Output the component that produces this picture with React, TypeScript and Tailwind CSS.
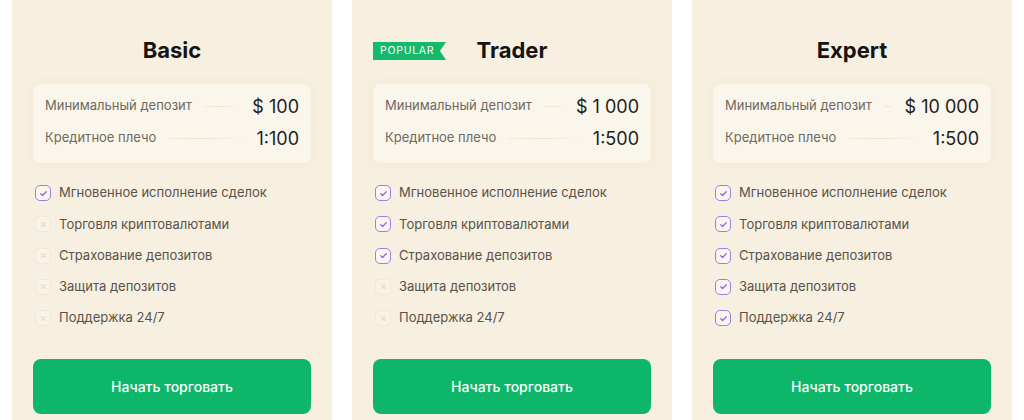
import React from 'react'

type Plan = {
  name: string
  deposit: string
  leverage: string
  enabled: number
  popular?: boolean
}

const plans: Plan[] = [
  { name: 'Basic', deposit: '$ 100', leverage: '1:100', enabled: 1 },
  { name: 'Trader', deposit: '$ 1 000', leverage: '1:500', enabled: 3, popular: true },
  { name: 'Expert', deposit: '$ 10 000', leverage: '1:500', enabled: 5 },
]

const features = [
  'Мгновенное исполнение сделок',
  'Торговля криптовалютами',
  'Страхование депозитов',
  'Защита депозитов',
  'Поддержка 24/7',
]

const CheckBox = ({ on }: { on: boolean }) =>
  on ? (
    <span className="flex h-4 w-4 shrink-0 items-center justify-center rounded-[5px] border-[1.5px] border-[#9a7fe6] bg-[#fbf7f0]">
      <svg width="9" height="9" viewBox="0 0 10 10" fill="none">
        <path d="M2 5.2l2 2L8 3" stroke="#8a6ae0" strokeWidth="1.4" strokeLinecap="round" strokeLinejoin="round" />
      </svg>
    </span>
  ) : (
    <span className="flex h-4 w-4 shrink-0 items-center justify-center rounded-[5px] border border-[#efe7d7] bg-[#f9f3e7]">
      <svg width="7" height="7" viewBox="0 0 8 8" fill="none">
        <path d="M1.5 1.5l5 5M6.5 1.5l-5 5" stroke="#e4dccb" strokeWidth="1.2" strokeLinecap="round" />
      </svg>
    </span>
  )

const StatRow = ({ label, value }: { label: string; value: string }) => (
  <div className="flex h-6 items-center">
    <span className="text-[13px] text-[#6d6960]">{label}</span>
    <span className="mx-3 h-px flex-1 bg-gradient-to-r from-[#f3ead9] via-[#ede3cf] to-transparent" />
    <span className="text-[18px] text-[#1d1d1b]">{value}</span>
  </div>
)

const PlanCard = ({ plan }: { plan: Plan }) => (
  <article className="relative flex h-[440px] w-[320px] flex-col bg-[#f7efdf] px-[21px] pt-9">
    {/* ── Ribbon ── */}
    {plan.popular && (
      <span className="absolute left-[21px] top-[42px] flex h-[18px] w-[73px] items-center bg-[#14b96c] pl-[7px] text-[10.5px] tracking-[0.07em] text-white [clip-path:polygon(0_0,100%_0,calc(100%-6px)_50%,100%_100%,0_100%)]">
        POPULAR
      </span>
    )}

    <h2 className="text-center text-[22px] font-bold leading-7 text-[#151515]">{plan.name}</h2>

    {/* ── Stats ── */}
    <div className="mt-5 flex flex-col gap-2 rounded-lg bg-[#fbf6ec] px-3 pb-[13px] pt-[10px] shadow-[0_0_10px_rgba(180,160,120,0.08)]">
      <StatRow label="Минимальный депозит" value={plan.deposit} />
      <StatRow label="Кредитное плечо" value={plan.leverage} />
    </div>

    {/* ── Features ── */}
    <ul className="mt-5 flex flex-col gap-[11.25px] pl-[2px]">
      {features.map((f, i) => (
        <li key={f} className="flex h-5 items-center gap-2">
          <CheckBox on={i < plan.enabled} />
          <span className="text-[13px] text-[#57534c]">{f}</span>
        </li>
      ))}
    </ul>

    <button className="mt-[31px] h-[55px] w-full rounded-lg bg-[#0db669] text-[14px] font-medium text-white">
      Начать торговать
    </button>
  </article>
)

export default function App() {
  return (
    <div className="h-[420px] w-[1024px] overflow-hidden bg-white font-['Inter','Noto_Sans',sans-serif]">
      <div className="flex gap-5 pl-3">
        {plans.map((p) => (
          <PlanCard key={p.name} plan={p} />
        ))}
      </div>
    </div>
  )
}
